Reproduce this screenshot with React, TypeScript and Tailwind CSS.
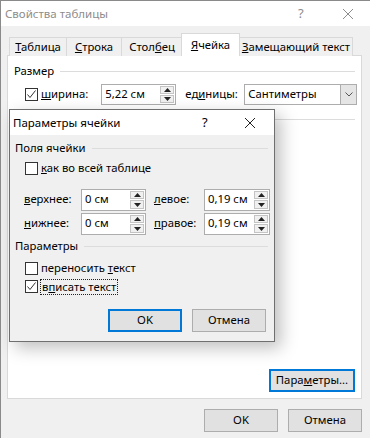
import React from 'react'

const font = { fontFamily: '"Noto Sans", "Segoe UI", sans-serif' }

function U({ children }: { children: React.ReactNode }) {
  return <span className="underline underline-offset-[1px]">{children}</span>
}

function Check({ checked }: { checked?: boolean }) {
  return (
    <div className="flex h-[13px] w-[13px] shrink-0 items-center justify-center border border-[#333] bg-white">
      {checked && (
        <svg width="11" height="11" viewBox="0 0 11 11">
          <polyline points="1.5,5.5 4,8.5 9.5,1.5" fill="none" stroke="#333" strokeWidth="1" />
        </svg>
      )}
    </div>
  )
}

function Spin({ value, w, h = 22 }: { value: string; w: number; h?: number }) {
  return (
    <div className="flex border border-[#adadad] bg-white" style={{ width: w, height: h }}>
      <div className="flex flex-1 items-center whitespace-nowrap pl-[3px] text-[11.3px] text-black">{value}</div>
      <div className="flex w-[16px] flex-col gap-px p-px">
        <div className="flex flex-1 items-center justify-center border border-[#c4c4c4] bg-[#f0f0f0]">
          <svg width="7" height="4" viewBox="0 0 7 4"><polygon points="3.5,0 7,4 0,4" fill="#222" /></svg>
        </div>
        <div className="flex flex-1 items-center justify-center border border-[#c4c4c4] bg-[#f0f0f0]">
          <svg width="7" height="4" viewBox="0 0 7 4"><polygon points="0,0 7,0 3.5,4" fill="#222" /></svg>
        </div>
      </div>
    </div>
  )
}

function Btn({ children, focus, w = 74 }: { children: React.ReactNode; focus?: boolean; w?: number }) {
  return (
    <div
      className={
        focus
          ? 'flex h-[23px] items-center justify-center whitespace-nowrap border-2 border-[#0078d7] bg-[#e1e1e1] text-[11.3px] text-black'
          : 'flex h-[23px] items-center justify-center whitespace-nowrap border border-[#adadad] bg-[#e1e1e1] text-[11.3px] text-black'
      }
      style={{ width: w }}
    >
      {children}
    </div>
  )
}

function Group({ title, right }: { title: string; right: number }) {
  return (
    <div className="flex items-center gap-[6px]" style={{ marginRight: right }}>
      <span className="text-[11.3px] text-black">{title}</span>
      <div className="h-px flex-1 bg-[#dcdcdc]" />
    </div>
  )
}

function Tab({ children, w, active }: { children: React.ReactNode; w: number; active?: boolean }) {
  return (
    <div
      className={
        active
          ? 'relative z-10 -mx-[1px] flex h-[23px] items-center justify-center whitespace-nowrap border border-b-0 border-[#d9d9d9] bg-white text-[11.3px] text-black'
          : 'flex h-[19px] items-center justify-center whitespace-nowrap border border-b-0 border-r-0 border-[#d9d9d9] bg-[#f0f0f0] pt-[1px] text-[11.3px] text-black last:border-r'
      }
      style={{ width: w }}
    >
      {children}
    </div>
  )
}

function CellDialog() {
  return (
    <div
      className="absolute left-[8px] top-[108px] flex h-[233px] w-[266px] flex-col border border-[#6f6f6f] bg-[#f0f0f0]"
      style={{ boxShadow: '6px 6px 16px rgba(0,0,0,0.25)' }}
    >
      <div className="flex h-[25px] items-center bg-white pl-[3px] text-[11.5px] text-black">
        <span className="flex-1">Параметры ячейки</span>
        <span className="w-[14px] text-[13px]">?</span>
        <div className="ml-[28px] mr-[18px] flex w-[12px] items-center justify-center">
          <svg width="12" height="12" viewBox="0 0 12 12"><path d="M1 1L11 11M11 1L1 11" stroke="#222" strokeWidth="1" /></svg>
        </div>
      </div>
      <div className="flex flex-col pl-[5px]">
        <div className="mt-[5px]">
          <Group title="Поля ячейки" right={6} />
        </div>
        <div className="ml-[10px] mt-[5px] flex h-[14px] items-center gap-[3px] text-[11.3px]">
          <Check />
          <span><U>к</U>ак во всей таблице</span>
        </div>
        <div className="mt-[13px] flex flex-col gap-[2px]">
          <div className="flex items-center">
            <span className="w-[66px] pl-[9px] text-[11.3px]"><U>в</U>ерхнее:</span>
            <Spin value="0 см" w={65} />
            <span className="w-[58px] pl-[8px] text-[11.3px]"><U>л</U>евое:</span>
            <Spin value="0,19 см" w={66} />
          </div>
          <div className="flex items-center">
            <span className="w-[66px] pl-[9px] text-[11.3px]"><U>н</U>ижнее:</span>
            <Spin value="0 см" w={65} />
            <span className="w-[58px] pl-[8px] text-[11.3px]"><U>п</U>равое:</span>
            <Spin value="0,19 см" w={66} />
          </div>
        </div>
        <div className="mt-[3px]">
          <Group title="Параметры" right={6} />
        </div>
        <div className="ml-[10px] mt-[7px] flex h-[14px] items-center gap-[3px] text-[11.3px]">
          <Check />
          <span>переносить <U>т</U>екст</span>
        </div>
        <div className="ml-[10px] mt-[3px] flex h-[16px] items-center gap-[2px] text-[11.3px]">
          <Check checked />
          <span className="border border-dotted border-[#222] px-[1px] leading-[14px]">в<U>п</U>исать текст</span>
        </div>
        <div className="mr-[8px] mt-[14px] flex justify-end gap-[10px]">
          <Btn focus>OK</Btn>
          <Btn>Отмена</Btn>
        </div>
      </div>
    </div>
  )
}

export default function App() {
  return (
    <div className="relative h-[438px] w-[370px] overflow-hidden border-l border-t border-[#8a8a8a] bg-[#f0f0f0]" style={font}>
      <div className="flex h-[25px] items-center bg-white pl-[4px] text-[11.5px] text-[#8d8d8d]">
        <span className="flex-1">Свойства таблицы</span>
        <span className="w-[14px] text-[13px]">?</span>
        <div className="ml-[30px] mr-[16px] flex w-[12px] items-center justify-center">
          <svg width="12" height="12" viewBox="0 0 12 12"><path d="M1 1L11 11M11 1L1 11" stroke="#8d8d8d" strokeWidth="1" /></svg>
        </div>
      </div>

      <div className="relative z-10 mt-[7px] -mb-px flex items-end pl-[8px]">
        <Tab w={57}><span><U>Т</U>аблица</span></Tab>
        <Tab w={55}><span><U>С</U>трока</span></Tab>
        <Tab w={61}><span>Стол<U>б</U>ец</span></Tab>
        <Tab w={59} active><span><U>Я</U>чейка</span></Tab>
        <Tab w={114}><span><U>З</U>амещающий текст</span></Tab>
      </div>

      <div className="ml-[6px] flex h-[344px] w-[355px] flex-col border border-[#d9d9d9] bg-white pl-[6px]">
        <div className="mt-[7px]">
          <Group title="Размер" right={6} />
        </div>
        <div className="mt-[4px] flex items-center">
          <div className="ml-[11px] flex items-center gap-[3px] text-[11.3px]">
            <Check checked />
            <span><U>ш</U>ирина:</span>
          </div>
          <div className="ml-[13px]">
            <Spin value="5,22 см" w={75} h={21} />
          </div>
          <span className="ml-[9px] w-[56px] whitespace-nowrap text-[11.3px]">ед<U>и</U>ницы:</span>
          <div className="ml-[3px] flex h-[21px] w-[113px] border border-[#adadad] bg-white">
            <span className="flex flex-1 items-center pl-[3px] text-[11.3px]">Сантиметры</span>
            <div className="flex w-[16px] items-center justify-center border-l border-[#adadad] bg-[#e5e5e5]">
              <svg width="8" height="5" viewBox="0 0 8 5"><polyline points="0.5,0.5 4,4 7.5,0.5" fill="none" stroke="#555" strokeWidth="1" /></svg>
            </div>
          </div>
        </div>
        <div className="mr-[6px] mt-[14px] h-px bg-[#dcdcdc]" />
        <div className="flex-1" />
        <div className="mb-[6px] mr-[6px] flex justify-end">
          <Btn focus w={86}><span>Пара<U>м</U>етры...</span></Btn>
        </div>
      </div>

      <div className="mr-[8px] mt-[10px] flex justify-end gap-[10px]">
        <Btn>OK</Btn>
        <Btn>Отмена</Btn>
      </div>

      <CellDialog />
    </div>
  )
}
